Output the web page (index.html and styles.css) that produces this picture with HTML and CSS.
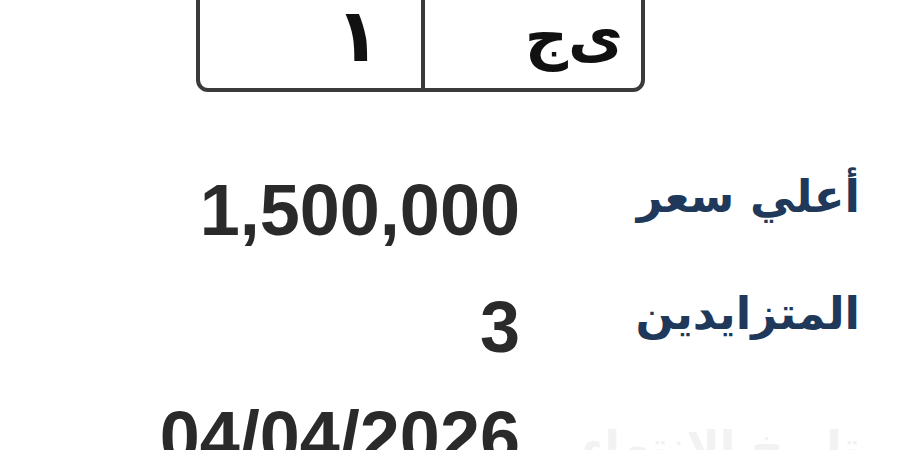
FILE: index.html
```html
<!DOCTYPE html>
<html lang="ar" dir="rtl">
<head>
<meta charset="utf-8">
<title>لوحة</title>
<link rel="stylesheet" href="styles.css">
</head>
<body>
<div class="page">
  <div class="plate">
    <div class="cell cell-letters">ى&zwnj;ج</div>
    <div class="cell cell-digits">١</div>
  </div>
  <div class="rows">
    <div class="row row-first">
      <div class="label">أعلي سعر</div>
      <div class="value"><bdi>1,500,000</bdi></div>
    </div>
    <div class="row row-second">
      <div class="label">المتزايدين</div>
      <div class="value"><bdi>3</bdi></div>
    </div>
    <div class="row row-third">
      <div class="label label-faint">تاريخ الانتهاء</div>
      <div class="value"><bdi>04/04/2026</bdi></div>
    </div>
  </div>
</div>
</body>
</html>
```
FILE: styles.css
```css
html, body {
  margin: 0;
  padding: 0;
  background: #ffffff;
  overflow: hidden;
}

.page {
  width: 900px;
  height: 450px;
  overflow: hidden;
  direction: rtl;
  font-family: "DejaVu Sans", "Liberation Sans", sans-serif;
}

.plate {
  box-sizing: border-box;
  width: 449px;
  height: 122px;
  margin-top: -30px;
  margin-right: 255px;
  border: 4px solid #3a3a3a;
  border-radius: 12px;
  display: flex;
}

.cell {
  box-sizing: border-box;
  width: 50%;
  display: flex;
  align-items: flex-end;
  padding-bottom: 22px;
  font-weight: bold;
  font-size: 60px;
  line-height: 1;
  color: #111111;
}

.cell-letters {
  border-left: 4px solid #3a3a3a;
  padding-right: 18px;
}

.cell-digits {
  padding-right: 40px;
  font-size: 74px;
  padding-bottom: 16px;
}

.rows {
  margin-top: 82px;
  margin-right: 40px;
}

.row {
  display: flex;
  align-items: flex-start;
}

.row-first {
  height: 117px;
}

.row-second {
  height: 110px;
}

.label {
  width: 340px;
  flex: none;
  padding-top: 0;
  font-size: 45px;
  line-height: 1;
  font-weight: bold;
  color: #20395a;
}

.label-faint {
  color: #f2f2f2;
  padding-top: 24px;
}

.value {
  font-family: "Liberation Sans", Arial, sans-serif;
  font-weight: bold;
  font-size: 72px;
  line-height: 1;
  color: #2a2a2a;
}
```
